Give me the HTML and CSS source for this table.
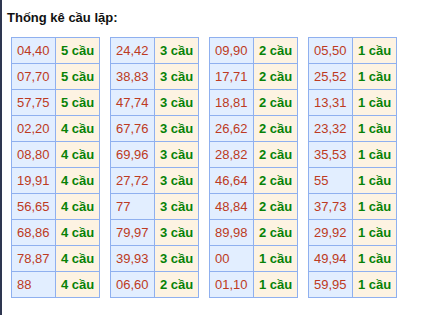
FILE: index.html
```html
<!DOCTYPE html>
<html lang="vi">
<head>
<meta charset="utf-8">
<title>Thống kê cầu lặp</title>
<link rel="stylesheet" href="styles.css">
</head>
<body>
<div class="page">
  <h3 class="title">Thống kê cầu lặp:</h3>
  <div class="tables">
    <table class="stat">
      <tr><td class="num">04,40</td><td class="cnt">5 cầu</td></tr>
      <tr><td class="num">07,70</td><td class="cnt">5 cầu</td></tr>
      <tr><td class="num">57,75</td><td class="cnt">5 cầu</td></tr>
      <tr><td class="num">02,20</td><td class="cnt">4 cầu</td></tr>
      <tr><td class="num">08,80</td><td class="cnt">4 cầu</td></tr>
      <tr><td class="num">19,91</td><td class="cnt">4 cầu</td></tr>
      <tr><td class="num">56,65</td><td class="cnt">4 cầu</td></tr>
      <tr><td class="num">68,86</td><td class="cnt">4 cầu</td></tr>
      <tr><td class="num">78,87</td><td class="cnt">4 cầu</td></tr>
      <tr><td class="num">88</td><td class="cnt">4 cầu</td></tr>
    </table>
    <table class="stat">
      <tr><td class="num">24,42</td><td class="cnt">3 cầu</td></tr>
      <tr><td class="num">38,83</td><td class="cnt">3 cầu</td></tr>
      <tr><td class="num">47,74</td><td class="cnt">3 cầu</td></tr>
      <tr><td class="num">67,76</td><td class="cnt">3 cầu</td></tr>
      <tr><td class="num">69,96</td><td class="cnt">3 cầu</td></tr>
      <tr><td class="num">27,72</td><td class="cnt">3 cầu</td></tr>
      <tr><td class="num">77</td><td class="cnt">3 cầu</td></tr>
      <tr><td class="num">79,97</td><td class="cnt">3 cầu</td></tr>
      <tr><td class="num">39,93</td><td class="cnt">3 cầu</td></tr>
      <tr><td class="num">06,60</td><td class="cnt">2 cầu</td></tr>
    </table>
    <table class="stat">
      <tr><td class="num">09,90</td><td class="cnt">2 cầu</td></tr>
      <tr><td class="num">17,71</td><td class="cnt">2 cầu</td></tr>
      <tr><td class="num">18,81</td><td class="cnt">2 cầu</td></tr>
      <tr><td class="num">26,62</td><td class="cnt">2 cầu</td></tr>
      <tr><td class="num">28,82</td><td class="cnt">2 cầu</td></tr>
      <tr><td class="num">46,64</td><td class="cnt">2 cầu</td></tr>
      <tr><td class="num">48,84</td><td class="cnt">2 cầu</td></tr>
      <tr><td class="num">89,98</td><td class="cnt">2 cầu</td></tr>
      <tr><td class="num">00</td><td class="cnt">1 cầu</td></tr>
      <tr><td class="num">01,10</td><td class="cnt">1 cầu</td></tr>
    </table>
    <table class="stat">
      <tr><td class="num">05,50</td><td class="cnt">1 cầu</td></tr>
      <tr><td class="num">25,52</td><td class="cnt">1 cầu</td></tr>
      <tr><td class="num">13,31</td><td class="cnt">1 cầu</td></tr>
      <tr><td class="num">23,32</td><td class="cnt">1 cầu</td></tr>
      <tr><td class="num">35,53</td><td class="cnt">1 cầu</td></tr>
      <tr><td class="num">55</td><td class="cnt">1 cầu</td></tr>
      <tr><td class="num">37,73</td><td class="cnt">1 cầu</td></tr>
      <tr><td class="num">29,92</td><td class="cnt">1 cầu</td></tr>
      <tr><td class="num">49,94</td><td class="cnt">1 cầu</td></tr>
      <tr><td class="num">59,95</td><td class="cnt">1 cầu</td></tr>
    </table>
  </div>
</div>
</body>
</html>
```
FILE: styles.css
```css
html, body {
  margin: 0;
  padding: 0;
  background: #ffffff;
}
body {
  font-family: "Liberation Sans", Arial, sans-serif;
  font-size: 13px;
  color: #000;
}
.page {
  border-left: 2px solid #2e3650;
  height: 315px;
  box-sizing: border-box;
  padding: 10px 0 0 5px;
}
.title {
  margin: 0;
  font-size: 13px;
  line-height: 15px;
  font-weight: bold;
  color: #111;
}
.tables {
  display: flex;
  gap: 10px;
  margin-top: 12px;
  padding-left: 4px;
  align-items: flex-start;
}
.stat {
  border-collapse: collapse;
  table-layout: fixed;
  width: 89px;
  border: 1px solid #8fb0ef;
}
.stat td {
  border: 1px solid #8fb0ef;
  height: 26px;
  padding: 0 0 0 5px;
  box-sizing: border-box;
  line-height: 15px;
  white-space: nowrap;
  vertical-align: middle;
}
.stat .num {
  width: 44px;
  background: #e2eeff;
  color: #bd3a22;
}
.stat .cnt {
  background: #fdf3e2;
  color: #078207;
  font-weight: bold;
}
```
